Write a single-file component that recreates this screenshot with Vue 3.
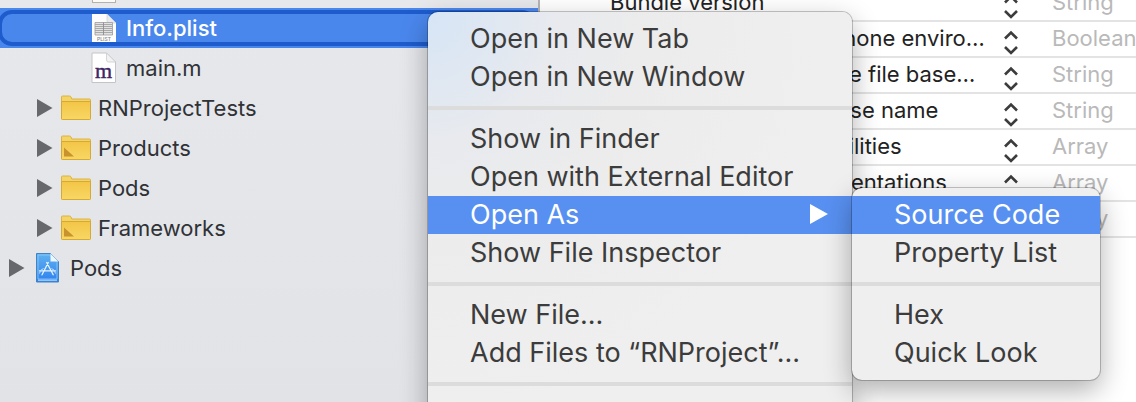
<template>
  <div class="window">
    <!-- project tree -->
    <nav class="sidebar">
      <ul class="tree">
        <li
          v-for="node in nodes"
          :key="node.id"
          class="node"
          :class="['level-' + node.level, { selected: node.id === selectedNode }]"
          @click="selectedNode = node.id"
        >
          <span class="toggle">
            <svg v-if="node.expandable" width="16" height="18" viewBox="0 0 16 18">
              <path d="M0 0L15.500 9L0 18Z" fill="#67686b" />
            </svg>
          </span>
          <span class="icon">
            <svg v-if="node.icon === 'image'" width="24" height="30" viewBox="0 0 24 30">
              <rect x="0.500" y="0.500" width="23" height="29" fill="#fbfaf6" stroke="#b3b1ab" />
              <rect x="2" y="2" width="20" height="25" fill="#d9bf83" />
            </svg>
            <svg v-else-if="node.icon === 'plist'" width="24" height="29" viewBox="0 0 24 29">
              <path d="M0 0H15L24 9V29H0Z" fill="#fdfdfd" />
              <path d="M15 0L24 9H17Q15 9 15 7Z" fill="#e9ebee" stroke="#c6c9ce" stroke-width="0.600" />
              <path d="M3 8.500H20.500V21H3Z" fill="#e2e2e2" stroke="#9a9a9a" stroke-width="0.800" />
              <path d="M3 10.500H20.500M3 12.500H20.500M3 14.500H20.500M3 16.500H20.500M3 18.500H20.500" stroke="#a3a3a3" stroke-width="0.900" />
              <path d="M11.500 8.500V21" stroke="#8d8d8d" stroke-width="0.900" />
              <text x="12" y="27.300" text-anchor="middle" font-size="5" font-weight="500" fill="#858585">PLIST</text>
            </svg>
            <svg v-else-if="node.icon === 'objc'" width="26" height="32" viewBox="0 0 26 32">
              <path d="M1 1H15.500L24.500 10V30.500H1Z" fill="#fefefe" stroke="#c3c4c7" />
              <path d="M15.500 1L24.500 10H17.500Q15.500 10 15.500 8Z" fill="#f2f2f3" stroke="#cacbcd" stroke-width="0.800" />
              <text class="objc-letter" x="12.500" y="26" text-anchor="middle" font-size="22" fill="#3d2466" stroke="#3d2466" stroke-width="0.400">m</text>
            </svg>
            <svg v-else-if="node.icon === 'project'" width="26" height="32" viewBox="0 0 26 32">
              <defs>
                <linearGradient id="project-fill" x1="0" y1="0" x2="0" y2="1">
                  <stop offset="0" stop-color="#5fb2f0" />
                  <stop offset="1" stop-color="#2f80ee" />
                </linearGradient>
              </defs>
              <path d="M1.500 1.500H15.500L23.500 9.500V30H1.500Z" fill="url(#project-fill)" stroke="#4083c4" />
              <path d="M3 3H14.500L22 10.500V27H3Z" fill="none" stroke="#8fcaf8" stroke-width="0.800" />
              <path d="M3 28.200H22" stroke="#c2e2fd" stroke-width="1" />
              <path d="M15.500 1.500L23.500 9.500H15.500Z" fill="#eef6fd" />
              <path d="M13.300 10.500L7 22.800M11.700 10.500L18.200 22.800M4.500 18.800H20.500" fill="none" stroke="#e6f4ff" stroke-width="1.300" stroke-linecap="round" />
              <path d="M4.500 21.500Q5 17.500 8.500 16.500M20.500 21.500Q20 17.500 16.500 16.500" fill="none" stroke="#c4e3fd" stroke-width="1" />
            </svg>
            <svg v-else width="30" height="26" viewBox="0 0 30 26">
              <defs>
                <linearGradient id="folder-fill" x1="0" y1="0" x2="0" y2="1">
                  <stop offset="0" stop-color="#f3c546" />
                  <stop offset="1" stop-color="#f8d765" />
                </linearGradient>
              </defs>
              <path d="M0.500 24V2Q0.500 1 1.500 1H8.500Q9.500 1 10 2L10.800 4H28.500Q29.500 4 29.500 5V24Z" fill="#f5d467" stroke="#dcb243" />
              <path d="M0.500 6.500H29.500V23.500Q29.500 24.500 28.500 24.500H1.500Q0.500 24.500 0.500 23.500Z" fill="url(#folder-fill)" stroke="#d6a933" />
              <path v-if="node.icon === 'group'" d="M3 12.500L13 21.500H3Z" fill="#c8922c" />
            </svg>
          </span>
          <span class="label">{{ node.label }}</span>
        </li>
      </ul>
    </nav>

    <!-- property list -->
    <main class="editor">
      <table class="plist">
        <tbody>
          <tr v-for="(row, i) in rows" :key="i">
            <td class="key">{{ row.key }}</td>
            <td class="stepper">
              <button type="button" aria-label="Key options">
                <svg width="16" height="34" viewBox="0 0 16 34">
                  <path d="M2 16.500L8 10.500L14 16.500M2 25L8 31L14 25" fill="none" stroke="#3c3c3c" stroke-width="2.600" />
                </svg>
              </button>
            </td>
            <td class="type">{{ row.type }}</td>
          </tr>
        </tbody>
      </table>
    </main>

    <!-- context menu -->
    <ul class="menu context-menu" role="menu">
      <li v-for="(item, i) in menuItems" :key="i" :class="{ separator: !item }" role="none">
        <button v-if="item" type="button" role="menuitem" :class="{ active: item === 'Open As' }">
          {{ item }}
          <svg v-if="item === 'Open As'" width="18" height="20" viewBox="0 0 18 20">
            <path d="M0 0L18 10L0 20Z" fill="#fff" />
          </svg>
        </button>
      </li>
    </ul>

    <ul class="menu submenu" role="menu">
      <li v-for="(item, i) in submenuItems" :key="i" :class="{ separator: !item }" role="none">
        <button v-if="item" type="button" role="menuitem" :class="{ active: item === 'Source Code' }">
          {{ item }}
        </button>
      </li>
    </ul>
  </div>
</template>

<script setup>
import { ref } from 'vue'

const selectedNode = ref(2)

const nodes = [
  { id: 1, level: 2, icon: 'image', label: '' },
  { id: 2, level: 2, icon: 'plist', label: 'Info.plist' },
  { id: 3, level: 2, icon: 'objc', label: 'main.m' },
  { id: 4, level: 1, icon: 'folder', label: 'RNProjectTests', expandable: true },
  { id: 5, level: 1, icon: 'group', label: 'Products', expandable: true },
  { id: 6, level: 1, icon: 'folder', label: 'Pods', expandable: true },
  { id: 7, level: 1, icon: 'group', label: 'Frameworks', expandable: true },
  { id: 8, level: 0, icon: 'project', label: 'Pods', expandable: true }
]

const rows = [
  { key: 'Bundle version', type: 'String' },
  { key: 'Application requires iPhone enviro…', type: 'Boolean' },
  { key: 'Launch screen interface file base…', type: 'String' },
  { key: 'Main storyboard file base name', type: 'String' },
  { key: 'Required device capabilities', type: 'Array' },
  { key: 'Supported interface orientations', type: 'Array' },
  { key: '', type: 'Array' }
]

// null is a separator
const menuItems = [
  'Open in New Tab',
  'Open in New Window',
  null,
  'Show in Finder',
  'Open with External Editor',
  'Open As',
  'Show File Inspector',
  null,
  'New File...',
  'Add Files to “RNProject”...',
  null
]

const submenuItems = ['Source Code', 'Property List', null, 'Hex', 'Quick Look']
</script>

<style>
body {
  margin: 0;
}
</style>

<style scoped>
.window {
  position: relative;
  display: flex;
  height: 100vh;
  overflow: hidden;
  background: #fff;
  font-family: Inter, "Liberation Sans", sans-serif;
}

ul {
  margin: 0;
  padding: 0;
  list-style: none;
}

button {
  border: 0;
  padding: 0;
  background: none;
  font: inherit;
  color: inherit;
}

.sidebar {
  flex: 0 0 538px;
  border-right: 2px solid #b4b4b6;
  background: linear-gradient(#e6e8ec, #e2e3e7);
  overflow: hidden;
}

/* scrolled a little way down */
.tree {
  margin-top: -32px;
}

.node {
  position: relative;
  display: flex;
  align-items: center;
  gap: 7px;
  height: 40px;
  font-size: 22px;
  color: #303236;
}

.level-0 {
  padding-left: 9px;
}

.level-1 {
  padding-left: 37px;
}

.level-2 {
  padding-left: 65px;
}

.node.selected {
  background: #4a87ed;
  color: #fff;
  font-weight: 500;
}

.node.selected::after {
  content: "";
  position: absolute;
  inset: 2px 2px 2px -2px;
  border: 4px solid #1e5ccd;
  border-radius: 14px;
}

.toggle {
  display: flex;
  width: 17px;
}

.icon {
  display: flex;
  justify-content: center;
  width: 30px;
}

.objc-letter {
  font-family: "Liberation Serif", serif;
}

.editor {
  flex: 1;
  min-width: 0;
  overflow: hidden;
}

.plist {
  width: 100%;
  margin-top: -14px;
  table-layout: fixed;
  border-collapse: separate;
  border-spacing: 0;
}

.plist td {
  height: 34px;
  padding: 0;
  border-bottom: 2px solid #e3e3e3;
  font-size: 22px;
  line-height: 32px;
  vertical-align: top;
  white-space: nowrap;
}

.plist .key {
  padding-left: 70px;
  color: #222;
}

.plist .stepper {
  width: 49px;
}

.stepper button {
  display: block;
  height: 34px;
}

.stepper svg {
  display: block;
}

.plist .type {
  width: 84px;
  color: #b9b9b9;
}

.menu {
  position: absolute;
  box-sizing: border-box;
  padding: 8px 0;
  border-radius: 10px;
  background: #efefef;
  box-shadow: 0 0 0 1px rgba(0, 0, 0, 0.22), 0 10px 28px rgba(0, 0, 0, 0.32);
  font-size: 27px;
  color: #3c3c3c;
}

.menu button {
  display: flex;
  align-items: center;
  justify-content: space-between;
  width: 100%;
  height: 38px;
  padding: 0 24px 2px 42px;
  white-space: nowrap;
}

.menu .active {
  background: #5890f1;
  color: #fff;
}

.separator {
  height: 4px;
  margin: 10px 0;
  background: #dcdcdc;
}

.context-menu {
  top: 12px;
  left: 428px;
  bottom: -20px;
  width: 424px;
  background: radial-gradient(circle at 0 0, #d6e5f6, #e8eaee 130px, #ececec 220px, #efefef 400px);
}

.submenu {
  top: 188px;
  left: 852px;
  width: 248px;
}
</style>
